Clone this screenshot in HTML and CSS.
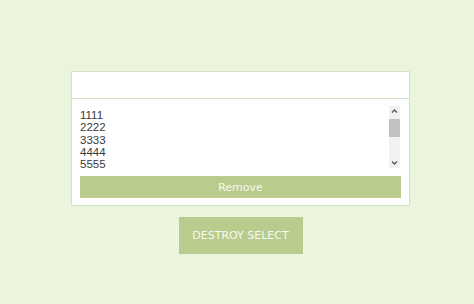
FILE: index.html
```html
<!DOCTYPE html>
<html lang="en">
<head>
  <meta charset="utf-8">
  <title>Select</title>
  <link rel="stylesheet" href="styles.css">
</head>
<body>
  <div class="wrap">
    <div class="box">
      <div class="search"></div>
      <div class="panel">
        <div class="list" role="listbox" aria-multiselectable="true">
          <div class="items">
            <div class="item">1111</div>
            <div class="item">2222</div>
            <div class="item">3333</div>
            <div class="item">4444</div>
            <div class="item">5555</div>
          </div>
          <div class="scrollbar">
            <svg class="arrow" width="11" height="10" viewBox="0 0 11 10"><path d="M3 6.5 L5.5 4 L8 6.5" fill="none" stroke="#555" stroke-width="1.3"/></svg>
            <div class="track"><div class="thumb"></div></div>
            <svg class="arrow" width="11" height="10" viewBox="0 0 11 10"><path d="M3 3.5 L5.5 6 L8 3.5" fill="none" stroke="#555" stroke-width="1.3"/></svg>
          </div>
        </div>
        <button class="btn remove">Remove</button>
      </div>
    </div>
    <button class="btn destroy">DESTROY SELECT</button>
  </div>
</body>
</html>
```

FILE: styles.css
```css
:root {
  --bg: #ebf5dd;
  --green: #b9cc8d;
  --border: #d5e3c0;
}
* {
  box-sizing: border-box;
}
html, body {
  margin: 0;
  padding: 0;
  background: var(--bg);
}
.wrap {
  width: 339px;
  margin-left: 71px;
  padding-top: 71px;
  display: flex;
  flex-direction: column;
  align-items: center;
}
.box {
  width: 100%;
  background: #fff;
  border: 1px solid var(--border);
}
.search {
  height: 27px;
  border-bottom: 1px solid var(--border);
}
.panel {
  padding: 7px 8px 7px 8px;
}
.list {
  display: flex;
  height: 64px;
  overflow: hidden;
}
.items {
  flex: 1;
  padding-top: 3px;
  font-family: "Liberation Sans", Arial, sans-serif;
  font-size: 11.5px;
  line-height: 12.25px;
  color: #3a3a3a;
}
.scrollbar {
  width: 11px;
  margin: 0 1px 0 0;
  height: 62px;
  display: flex;
  flex-direction: column;
  background: #f1f1f1;
}
.arrow {
  display: block;
  flex: none;
}
.track {
  flex: 1;
  padding-top: 3px;
}
.thumb {
  height: 18px;
  background: #c1c1c1;
}
.btn {
  border: none;
  background: var(--green);
  color: #f6faef;
  font-family: "DejaVu Sans", sans-serif;
  cursor: pointer;
}
.remove {
  display: block;
  width: 100%;
  height: 22px;
  margin-top: 6px;
  font-size: 11px;
}
.destroy {
  margin-top: 11px;
  width: 124px;
  height: 37px;
  font-size: 11px;
}
```
